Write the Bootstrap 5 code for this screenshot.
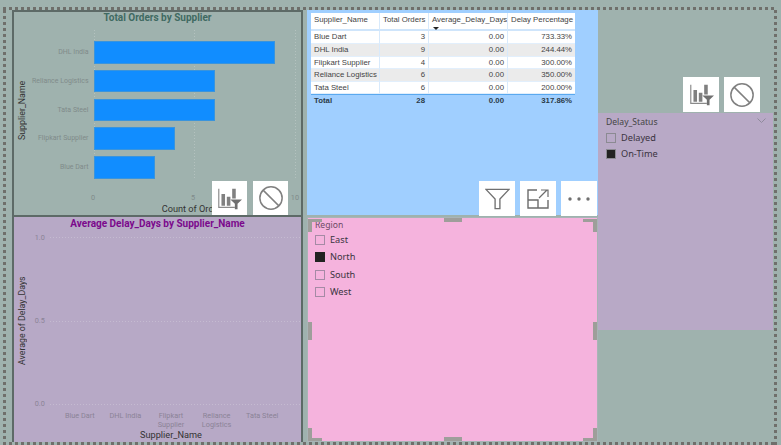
<!DOCTYPE html>
<html lang="en">
<head>
    <meta charset="UTF-8">
    <meta name="viewport" content="width=device-width, initial-scale=1.0">
    <title>Supplier Report</title>
    <link href="https://cdn.jsdelivr.net/npm/bootstrap@5.3.0/dist/css/bootstrap.min.css" rel="stylesheet">
    <style>
        html, body { height: 445px; overflow: hidden; background: #9fb2ae; }
        body { font-family: "Noto Sans", "Liberation Sans", sans-serif; color: #444; }

        /* dotted canvas edge */
        .canvas-frame {
            margin: 7px 4px 0 3px;
            width: 774px;
            height: 438px;
            padding: 3px 0 0 9px;
            display: grid;
            grid-template-columns: 295px 291px 175px;
            grid-template-rows: 206px 226px;
            background-image:
                repeating-linear-gradient(90deg, #6f6f6b 0 3px, transparent 3px 6px),
                repeating-linear-gradient(90deg, #6f6f6b 0 3px, transparent 3px 6px),
                repeating-linear-gradient(0deg, #6f6f6b 0 3px, transparent 3px 6px),
                repeating-linear-gradient(0deg, #6f6f6b 0 3px, transparent 3px 6px);
            background-size: 100% 3px, 100% 3px, 3px 100%, 3px 100%;
            background-position: 0 0, 0 100%, 0 0, 100% 0;
            background-repeat: no-repeat;
        }

        .chart-panel { position: relative; border: 2px solid #5d6a67; font-family: Roboto, "Liberation Sans", sans-serif; }
        .orders-panel { background: #9fb2ae; border-bottom-width: 1px; }
        .delay-panel { background: #b7a9c6; border-top-width: 1px; border-bottom: 0; }
        .chart-title { font-size: 10px; font-weight: 700; line-height: 14px; text-align: center; }
        .orders-panel .chart-title { color: #3f6a62; margin: -1px 0 1px; }
        .delay-panel .chart-title { color: #7b0a8c; }
        .axis-title { font-size: 9.2px; line-height: 12px; color: #333; white-space: nowrap; }
        .axis-side { writing-mode: vertical-rl; transform: rotate(180deg); text-align: center; width: 12px; font-size: 8.8px; }
        .tick-text { font-size: 7.3px; line-height: 9px; color: #7f8b8a; }
        .delay-panel .tick-text { color: #8b8396; }

        /* bar chart */
        .orders-body { display: flex; height: 167px; padding-top: 4px; padding-left: 1px; }
        .orders-body .axis-side { margin-left: 1px; margin-top: 5px; height: 150px; }
        .bar-labels { width: 65.5px; padding-top: 11px; font-size: 7px; }
        .bar-labels div { height: 28.8px; line-height: 23px; text-align: right; padding-right: 5px; white-space: nowrap; }
        .bar-plot {
            width: 203px;
            padding-top: 11px;
            height: 150px;
            background-image:
                repeating-linear-gradient(180deg, #b4c2bf 0 1px, transparent 1px 3px),
                repeating-linear-gradient(180deg, #b4c2bf 0 1px, transparent 1px 3px),
                repeating-linear-gradient(180deg, #b4c2bf 0 1px, transparent 1px 3px);
            background-size: 1px 100%;
            background-position: 0 0, 100.5px 0, 201px 0;
            background-repeat: no-repeat;
        }
        .bar-slot { height: 28.8px; }
        .bar-fill { height: 22.5px; background: #118dff; border: 1px solid #3a94dc; }
        .bar-ticks { display: flex; justify-content: space-between; width: 208px; margin: 0 0 0 77px; }
        .orders-foot { text-align: center; margin: 0 0 0 81px; width: 198px; padding-top: 1px; }

        /* empty column chart */
        .delay-body { display: flex; height: 179.5px; }
        .delay-body .axis-side { margin-left: 2px; margin-top: 5px; height: 170px; }
        .y-scale { width: 16px; height: 175px; display: flex; flex-direction: column; justify-content: space-between; margin: 2px 0 0 1px; text-align: right; }
        .y-scale span { display: block; }
        .grid-lines { width: 253px; height: 168px; margin: 6px 0 0 5px; display: flex; flex-direction: column; justify-content: space-between; }
        .grid-lines i { display: block; height: 1px; background: repeating-linear-gradient(90deg, #c5bbd1 0 1px, transparent 1px 3px); }
        .x-names { display: grid; grid-template-columns: repeat(5, 45.6px); margin: 0 0 0 43px; text-align: center; }
        .delay-foot { text-align: center; padding-left: 27px; }

        /* table visual */
        .table-panel { position: relative; background: #a0cfff; margin-bottom: 1px; padding: 3px 0 0 4px; }
        .table-visual { width: 264px; margin: 0; font-family: "Liberation Sans", Arial, sans-serif; font-size: 7.8px; --bs-table-bg: transparent; color: #444; table-layout: fixed; border-collapse: separate; border-spacing: 0; }
        .table-visual th, .table-visual td { padding: 0 3px; border: 0; border-left: 1px solid #d8eafc; color: #444; white-space: nowrap; height: 12.6px; line-height: 11.6px; }
        .table-visual th:first-child, .table-visual td:first-child { border-left: 0; }
        .table-visual thead th { background: #fff; font-weight: 400; height: 18.4px; line-height: 12px; vertical-align: top; padding-top: 1px; border-bottom: 2px solid #cfe5fb; position: relative; }
        .table-visual tbody td { background: #fff; border-bottom: 1px solid #e2effc; }
        .table-visual tbody tr:nth-child(even) td { background: #ebebeb; }
        .table-visual tfoot td { background: transparent; font-weight: 700; color: #2b3a48; border-top: 1px solid #5aa9ef; border-left: 0; height: 12px; line-height: 12px; }
        .sort-caret { position: absolute; left: 4px; bottom: -1px; width: 0; height: 0; border-left: 3px solid transparent; border-right: 3px solid transparent; border-top: 3px solid #222; }

        /* slicers */
        .slicer-title { font-size: 8.6px; line-height: 12px; }
        .slicer-item { display: flex; align-items: center; font-size: 9.2px; line-height: 12px; color: #3a3340; }
        .slicer-box { width: 10px; height: 10px; border: 1px solid #a58aa5; margin-right: 5px; flex: none; }
        .slicer-box.is-on { background: #222; border-color: #222; }

        .region-panel { position: relative; background: #f5b3dd; border: 1px solid #a9b4b6; margin-top: 1px; padding: 2px 7px 0 7px; height: 225px; }
        .region-panel .slicer-title { color: #6b4a63; line-height: 10px; }
        .region-panel .slicer-item { height: 17.5px; }
        .region-panel .slicer-list { margin-top: 1px; }
        .slicer-status { position: relative; grid-column: 3; grid-row: 1 / 3; align-self: start; margin-top: 103px; height: 217px; background: #b8a9c6; padding: 3px 8px; }
        .slicer-status .slicer-item { height: 16px; }
        .slicer-status .slicer-box { border-color: #8b8a92; }
        .slicer-status .slicer-list { margin-top: 2px; }
        .slicer-chevron { position: absolute; top: 5px; right: 7px; }

        /* resize handles over the selected visual */
        .grip { position: absolute; background: #9e9e9a; }
        .grip-top { top: 0; left: 136px; width: 18px; height: 4px; }
        .grip-bottom { bottom: 0; left: 136px; width: 18px; height: 4px; }
        .grip-left { left: 0; top: 104px; width: 4px; height: 18px; }
        .grip-right { right: 0; top: 104px; width: 4px; height: 18px; }
        .grip-corner { position: absolute; width: 14px; height: 13px; border: 0 solid #9e9e9a; }
        .corner-tl { top: 1px; left: 0; border-width: 3px 0 0 4px; }
        .corner-tr { top: 1px; right: 0; border-width: 3px 4px 0 0; }
        .corner-bl { bottom: 0; left: 0; border-width: 0 0 3px 4px; }
        .corner-br { bottom: 0; right: 0; border-width: 0 4px 3px 0; }

        /* white hover icons */
        .hover-tools { position: absolute; display: flex; gap: 5px; }
        .hover-tool { width: 36px; height: 35px; background: #fff; display: flex; align-items: center; justify-content: center; }
        .tools-orders { top: 169px; left: 198px; gap: 6px; }
        .tools-orders .hover-tool { width: 35px; height: 34px; }
        .tools-table { top: 171px; right: 1px; }
        .tools-status { top: -36px; right: 13px; }
    </style>
</head>
<body>
    <svg width="0" height="0" class="d-block" aria-hidden="true">
        <symbol id="ico-bars" viewBox="0 0 28 28">
            <path d="M2 3v21h18" fill="none" stroke="#8a8a8a" stroke-width="1.3"/>
            <path d="M5 9h4v13H5zM11 12h4v10h-4zM17 3h4v11h-4z" fill="#808080"/>
            <path d="M15 15h13l-5 5v6h-3v-6z" fill="#707070"/>
        </symbol>
        <symbol id="ico-ban" viewBox="0 0 28 28">
            <circle cx="14" cy="14" r="12" fill="none" stroke="#808080" stroke-width="1.6"/>
            <path d="M5.5 5.5l17 17" stroke="#808080" stroke-width="1.6"/>
        </symbol>
        <symbol id="ico-funnel" viewBox="0 0 26 22">
            <path d="M1 1h24l-9.500 10v10h-5V11z" fill="none" stroke="#707070" stroke-width="1.4"/>
        </symbol>
        <symbol id="ico-expand" viewBox="0 0 22 20">
            <path d="M10 1H1v18h20v-8M1 11h10v8" fill="none" stroke="#6c6c6c" stroke-width="1.4"/>
            <path d="M12 9l8-8M14 1h7v7" fill="none" stroke="#6c6c6c" stroke-width="1.2"/>
        </symbol>
        <symbol id="ico-dots" viewBox="0 0 22 4">
            <circle cx="2" cy="2" r="1.700" fill="#707070"/>
            <circle cx="11" cy="2" r="1.700" fill="#707070"/>
            <circle cx="20" cy="2" r="1.700" fill="#707070"/>
        </symbol>
    </svg>

    <div class="canvas-frame">
        <!-- Total Orders -->
        <section class="chart-panel orders-panel me-1">
            <div class="chart-title">Total Orders by Supplier</div>
            <div class="orders-body">
                <div class="axis-title axis-side">Supplier_Name</div>
                <div class="bar-labels tick-text">
                    <div>DHL India</div>
                    <div>Reliance Logistics</div>
                    <div>Tata Steel</div>
                    <div>Flipkart Supplier</div>
                    <div>Blue Dart</div>
                </div>
                <div class="bar-plot">
                    <div class="bar-slot"><div class="bar-fill" style="width: 181px"></div></div>
                    <div class="bar-slot"><div class="bar-fill" style="width: 121px"></div></div>
                    <div class="bar-slot"><div class="bar-fill" style="width: 121px"></div></div>
                    <div class="bar-slot"><div class="bar-fill" style="width: 81px"></div></div>
                    <div class="bar-slot"><div class="bar-fill" style="width: 61px"></div></div>
                </div>
            </div>
            <div class="bar-ticks tick-text"><span>0</span><span>5</span><span>10</span></div>
            <div class="axis-title orders-foot">Count of Orders</div>
            <div class="hover-tools tools-orders">
                <div class="hover-tool"><svg width="25" height="25"><use href="#ico-bars"/></svg></div>
                <div class="hover-tool"><svg width="26" height="26"><use href="#ico-ban"/></svg></div>
            </div>
        </section>

        <!-- Table -->
        <section class="table-panel">
            <table class="table table-visual">
                <colgroup><col style="width: 68px"><col style="width: 49px"><col style="width: 79px"><col style="width: 68px"></colgroup>
                <thead>
                    <tr>
                        <th>Supplier_Name</th>
                        <th class="text-end">Total Orders</th>
                        <th class="text-end">Average_Delay_Days<span class="sort-caret"></span></th>
                        <th class="text-end">Delay Percentage</th>
                    </tr>
                </thead>
                <tbody>
                    <tr><td>Blue Dart</td><td class="text-end">3</td><td class="text-end">0.00</td><td class="text-end">733.33%</td></tr>
                    <tr><td>DHL India</td><td class="text-end">9</td><td class="text-end">0.00</td><td class="text-end">244.44%</td></tr>
                    <tr><td>Flipkart Supplier</td><td class="text-end">4</td><td class="text-end">0.00</td><td class="text-end">300.00%</td></tr>
                    <tr><td>Reliance Logistics</td><td class="text-end">6</td><td class="text-end">0.00</td><td class="text-end">350.00%</td></tr>
                    <tr><td>Tata Steel</td><td class="text-end">6</td><td class="text-end">0.00</td><td class="text-end">200.00%</td></tr>
                </tbody>
                <tfoot>
                    <tr><td>Total</td><td class="text-end">28</td><td class="text-end">0.00</td><td class="text-end">317.86%</td></tr>
                </tfoot>
            </table>
            <div class="hover-tools tools-table">
                <div class="hover-tool"><svg width="25" height="22"><use href="#ico-funnel"/></svg></div>
                <div class="hover-tool"><svg width="22" height="20"><use href="#ico-expand"/></svg></div>
                <div class="hover-tool"><svg width="22" height="4"><use href="#ico-dots"/></svg></div>
            </div>
        </section>

        <!-- Delay_Status slicer -->
        <section class="slicer-status">
            <div class="slicer-title">Delay_Status</div>
            <svg class="slicer-chevron" width="9" height="5" viewBox="0 0 9 5"><path d="M.5.5l4 4 4-4" fill="none" stroke="#8f8a9c"/></svg>
            <div class="slicer-list">
                <div class="slicer-item"><span class="slicer-box"></span>Delayed</div>
                <div class="slicer-item"><span class="slicer-box is-on"></span>On-Time</div>
            </div>
            <div class="hover-tools tools-status">
                <div class="hover-tool"><svg width="25" height="25"><use href="#ico-bars"/></svg></div>
                <div class="hover-tool"><svg width="26" height="26"><use href="#ico-ban"/></svg></div>
            </div>
        </section>

        <!-- Average Delay -->
        <section class="chart-panel delay-panel me-1">
            <div class="chart-title">Average Delay_Days by Supplier_Name</div>
            <div class="delay-body">
                <div class="axis-title axis-side">Average of Delay_Days</div>
                <div class="y-scale tick-text"><span>1.0</span><span>0.5</span><span>0.0</span></div>
                <div class="grid-lines"><i></i><i></i><i></i></div>
            </div>
            <div class="x-names tick-text">
                <span>Blue Dart</span><span>DHL India</span><span>Flipkart Supplier</span><span>Reliance Logistics</span><span>Tata Steel</span>
            </div>
            <div class="axis-title delay-foot">Supplier_Name</div>
        </section>

        <!-- Region slicer -->
        <section class="region-panel">
            <div class="slicer-title">Region</div>
            <div class="slicer-list">
                <div class="slicer-item"><span class="slicer-box"></span>East</div>
                <div class="slicer-item"><span class="slicer-box is-on"></span>North</div>
                <div class="slicer-item"><span class="slicer-box"></span>South</div>
                <div class="slicer-item"><span class="slicer-box"></span>West</div>
            </div>
            <span class="grip grip-top"></span><span class="grip grip-bottom"></span>
            <span class="grip grip-left"></span><span class="grip grip-right"></span>
            <span class="grip-corner corner-tl"></span><span class="grip-corner corner-tr"></span>
            <span class="grip-corner corner-bl"></span><span class="grip-corner corner-br"></span>
        </section>
    </div>

    <script src="https://cdn.jsdelivr.net/npm/bootstrap@5.3.0/dist/js/bootstrap.bundle.min.js"></script>
</body>
</html>
